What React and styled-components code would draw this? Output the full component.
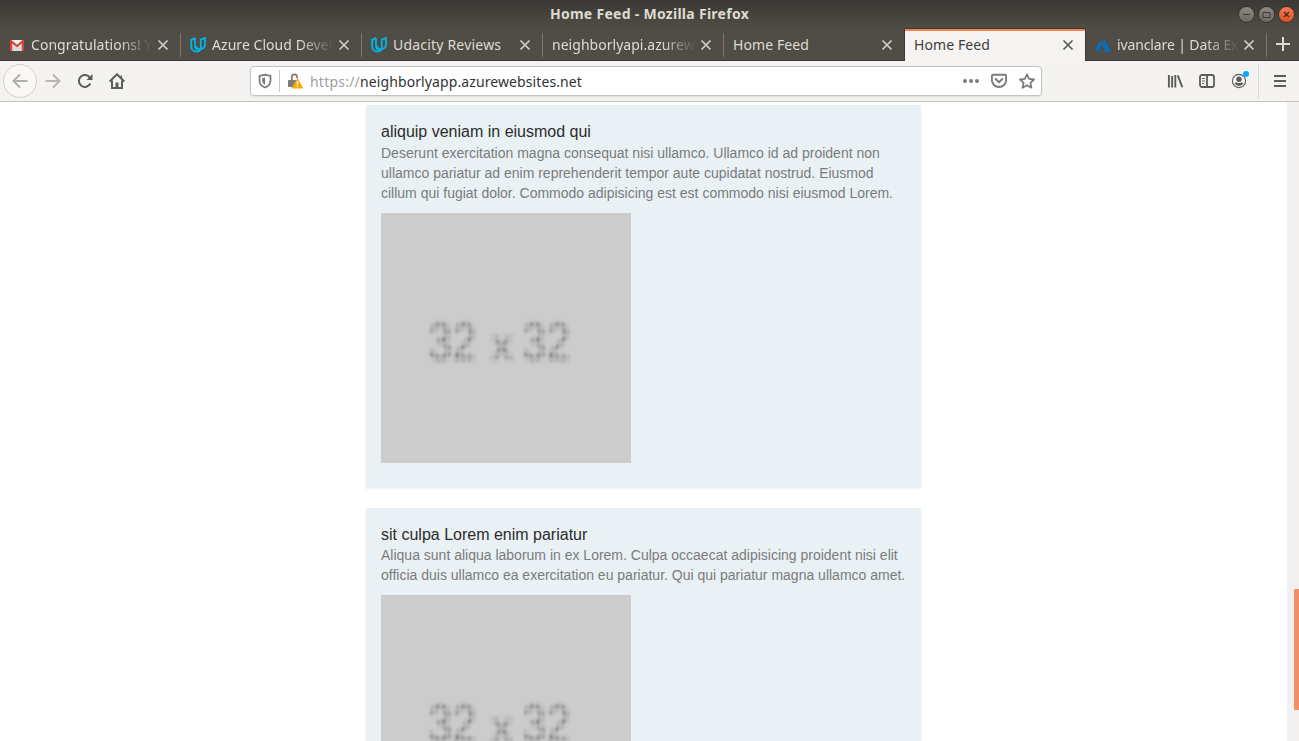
import React from "react";
import styled, { createGlobalStyle, css } from "styled-components";

const GlobalStyle = createGlobalStyle`
  * { box-sizing: border-box; }
  html, body { margin: 0; height: 741px; overflow: hidden; background: #fff; }
`;

const Browser = styled.div`
  width: 1299px;
  height: 741px;
  display: flex;
  flex-direction: column;
  overflow: hidden;
  font-family: "Noto Sans", "Open Sans", sans-serif;
`;

const Frame = styled.header`
  height: 61px;
  flex: none;
  background: linear-gradient(#3b3a36 0, #3d3c37 6px, #504d46 28px, #504d46 100%);
  display: flex;
  flex-direction: column;
`;

const TitleBar = styled.div`
  height: 28px;
  display: grid;
  grid-template-columns: 1fr auto 1fr;
  align-items: center;
`;

const WindowTitle = styled.div`
  grid-column: 2;
  font-size: 14px;
  font-weight: 700;
  line-height: 28px;
  width: 200px;
  text-align: center;
  letter-spacing: 0.28px;
  white-space: nowrap;
  color: #dfdbd2;
`;

const WindowButtons = styled.div`
  display: flex;
  justify-content: flex-end;
  gap: 3px;
  padding-right: 4.5px;
`;

const WindowButton = styled.span`
  width: 17px;
  height: 17px;
  border-radius: 50%;
  border: 1px solid #34332f;
  background: ${(p) => (p.$close ? "linear-gradient(#f37b55, #e0501f)" : "linear-gradient(#8b8981, #6b6962)")};
  display: flex;
  align-items: center;
  justify-content: center;
`;

const TabStrip = styled.nav`
  height: 33px;
  display: flex;
`;

const TabItem = styled.div`
  width: 181px;
  height: 33px;
  flex: none;
  display: flex;
  align-items: center;
  padding: 1px 12px 0 9px;
  color: #dfdbd2;
  border-bottom: 1px solid #3a3935;
  background: linear-gradient(#7b786f, #7b786f) right 5px / 1px 24px no-repeat;
  ${(p) => p.$plain && css`background: none;`}
  ${(p) =>
    p.$active &&
    css`
      background: #f5f4f2;
      color: #3d3d3d;
      border-bottom: 0;
      padding-top: 0;
      padding-bottom: 1px;
      border-top: 1px solid #3a3935;
      box-shadow: inset -1px 0 #3a3935, inset 0 2px #f58152, -1px 0 #3a3935;
      z-index: 1;
    `}
`;

const Favicon = styled.span`
  width: 16px;
  height: 16px;
  margin-right: 6px;
  flex: none;
  display: flex;
`;

const TabLabel = styled.span`
  flex: 1;
  min-width: 0;
  overflow: hidden;
  white-space: nowrap;
  font-size: 14px;
  line-height: 24px;
  padding-top: 1px;
  letter-spacing: ${(p) => p.$spacing || 0}px;
  ${(p) => p.$fade && css`mask-image: linear-gradient(to right, #000 calc(100% - 34px), transparent 100%);`}
`;

const CloseButton = styled.span`
  width: 12px;
  height: 12px;
  margin-left: 4px;
  flex: none;
  display: flex;
`;

const NewTab = styled.div`
  width: 32px;
  display: flex;
  align-items: center;
  justify-content: center;
  border-bottom: 1px solid #3a3935;
`;

const Toolbar = styled.div`
  height: 41px;
  flex: none;
  display: flex;
  align-items: center;
  background: #f4f3f1;
  border-bottom: 1px solid #c6c3bf;
`;

const NavButtons = styled.div`
  width: 250px;
  display: flex;
  align-items: center;
  padding-left: 3px;
`;

const BackButton = styled.span`
  width: 34px;
  height: 34px;
  border-radius: 50%;
  border: 1px solid #d3d1ce;
  background: #f9f8f7;
  display: flex;
  align-items: center;
  justify-content: center;
`;

const ToolButton = styled.span`
  width: 32px;
  height: 32px;
  flex: none;
  display: flex;
  align-items: center;
  justify-content: center;
`;

const UrlBar = styled.div`
  width: 792px;
  height: 30px;
  margin-bottom: 1px;
  border: 1px solid #c5c3c0;
  border-radius: 4px;
  background: #fff;
  box-shadow: 0 1px 2px rgba(0, 0, 0, 0.08);
  display: flex;
  align-items: center;
  padding-left: 6px;
`;

const UrlDivider = styled.span`
  width: 1px;
  height: 22px;
  margin: 0 7px 0 6px;
  background: #c9c9c9;
`;

const UrlText = styled.span`
  flex: 1;
  margin-left: 7px;
  padding-top: 2px;
  font-size: 14px;
  line-height: 26px;
  letter-spacing: 0.1px;
  white-space: nowrap;
  color: #333;
`;

const Scheme = styled.span`
  color: #a0a0a0;
  letter-spacing: 0.22px;
`;

const UrlActions = styled.div`
  display: flex;
  gap: 12px;
  padding-right: 6px;
`;

const RightTools = styled.div`
  flex: 1;
  display: flex;
  align-items: center;
  justify-content: flex-end;
  padding-right: 3px;
`;

const ToolDivider = styled.span`
  width: 1px;
  height: 34px;
  margin: 0 5px 0 3px;
  background: #dbd9d6;
`;

const Viewport = styled.main`
  flex: 1;
  min-height: 0;
  display: flex;
  background: #fff;
`;

const Page = styled.div`
  flex: 1;
  overflow: hidden;
  display: flex;
  flex-direction: column;
  align-items: center;
  gap: 20px;
  padding-top: 2.7px;
  font-family: "Liberation Sans", Arial, sans-serif;
`;

const Card = styled.article`
  width: 555px;
  flex: none;
  padding: 15px 15px 25px;
  background: #e9f1f5;
  box-shadow: 0 1px 2px rgba(0, 0, 0, 0.07);
`;

const CardTitle = styled.h4`
  margin: 0;
  padding-top: 1px;
  font-size: 16px;
  line-height: 21.86px;
  font-weight: 400;
  color: #2c2c2c;
`;

const CardText = styled.p`
  margin: 0 0 10px;
  font-size: 14px;
  line-height: 20px;
  white-space: nowrap;
  color: #7b7b7b;
`;

const Placeholder = styled.div`
  width: 250px;
  height: 250px;
  background: #cccccc;
  overflow: hidden;
  display: flex;
  align-items: baseline;
  padding: 99px 0 0 47px;
  color: #6e6e6e;
  font-size: 53px;
  line-height: 60px;
`;

const grain = css`
  filter: blur(2.8px);
  mask: radial-gradient(circle, #000 10%, rgba(0, 0, 0, 0.4) 75%) 0 0 / 7.8px 7.8px;
`;

const SizeNumber = styled.span`
  width: 60px;
  margin-right: -10px;
  transform: scaleX(0.82);
  transform-origin: left;
  ${grain}
`;

const SizeCross = styled.span`
  width: 44px;
  padding-left: 13px;
  font-size: 44px;
  ${grain}
`;

const ScrollTrack = styled.div`
  width: 12px;
  flex: none;
  padding: 487px 0 0 7px;
  background: #f1f0ef;
`;

const ScrollThumb = styled.div`
  height: 121px;
  border-radius: 1px 0 0 1px;
  background: #f18f69;
`;

const Stroke = ({ size = 16, color = "#5c5c5a", width = 2, children }) => (
  <svg width={size} height={size} viewBox={`0 0 ${size} ${size}`} fill="none" stroke={color} strokeWidth={width}>
    {children}
  </svg>
);

const GmailIcon = () => (
  <svg width="16" height="16" viewBox="0 0 16 16">
    <path d="M1 3h14v11H1z" fill="#f0efed" />
    <path d="M3 14V7l5 4 5-4v7z" fill="#dedcda" />
    <path d="M1 14V3h1.4L8 7.8 13.600 3H15v11h-2.200V6.400L8 10.400 3.200 6.400V14z" fill="#d8433a" />
  </svg>
);

const UdacityIcon = () => (
  <Stroke color="#02b3e4" width={2}>
    <path d="M5 .900 1.200 3v6.200c0 3.300 2.300 5.200 5.300 5.200 2 0 3.500-.800 4.300-2.200" />
    <path d="M5 1v7.800c0 2.200 1.200 3.300 3 3.300M10.800 12.200V2.600L15 .900V7c0 3-1.800 5.200-5.600 5.200C7 12.200 6.200 11 6.200 9" strokeWidth="1.800" />
  </Stroke>
);

const AzureIcon = () => (
  <svg width="16" height="16" viewBox="0 0 16 16" fill="#0072c6">
    <path d="M8.800 1.800 4.200 5.800 0 13.200h3.800z" />
    <path d="M9.500 2.800 7 8.600l4 4.700-7.500 1.100H16z" />
  </svg>
);

const icons = { gmail: GmailIcon, udacity: UdacityIcon, azure: AzureIcon };

const tabs = [
  { label: "Congratulations! Your", icon: "gmail", fade: true, spacing: 0.03 },
  { label: "Azure Cloud Develop", icon: "udacity", fade: true, spacing: 0.05 },
  { label: "Udacity Reviews", icon: "udacity", spacing: 0.2 },
  { label: "neighborlyapi.azurewe", fade: true, spacing: 0.03 },
  { label: "Home Feed", plain: true, spacing: 0.1 },
  { label: "Home Feed", active: true, spacing: 0.1 },
  { label: "ivanclare | Data Exp", icon: "azure", fade: true, spacing: -0.12 },
];

const Tab = ({ tab }) => {
  const Icon = icons[tab.icon];
  return (
    <TabItem $active={tab.active} $plain={tab.plain}>
      {Icon && <Favicon><Icon /></Favicon>}
      <TabLabel $fade={tab.fade} $spacing={tab.spacing}>{tab.label}</TabLabel>
      <CloseButton>
        <Stroke size={12} color={tab.active ? "#5a5a58" : "#d2cec6"} width={1.7}>
          <path d="M1.500 1.500l9 9M10.500 1.500l-9 9" />
        </Stroke>
      </CloseButton>
    </TabItem>
  );
};

const PlaceholderImage = () => (
  <Placeholder>
    <SizeNumber>32</SizeNumber>
    <SizeCross>x</SizeCross>
    <SizeNumber>32</SizeNumber>
  </Placeholder>
);

const posts = [
  {
    title: "aliquip veniam in eiusmod qui",
    lines: [
      "Deserunt exercitation magna consequat nisi ullamco. Ullamco id ad proident non",
      "ullamco pariatur ad enim reprehenderit tempor aute cupidatat nostrud. Eiusmod",
      "cillum qui fugiat dolor. Commodo adipisicing est est commodo nisi eiusmod Lorem.",
    ],
  },
  {
    title: "sit culpa Lorem enim pariatur",
    lines: [
      "Aliqua sunt aliqua laborum in ex Lorem. Culpa occaecat adipisicing proident nisi elit",
      "officia duis ullamco ea exercitation eu pariatur. Qui qui pariatur magna ullamco amet.",
    ],
  },
];

export default function App() {
  return (
    <Browser>
      <GlobalStyle />
      <Frame>
        <TitleBar>
          <span />
          <WindowTitle>Home Feed - Mozilla Firefox</WindowTitle>
          <WindowButtons>
            <WindowButton>
              <Stroke size={9} color="#3c3b37" width={1}><path d="M1 4.500h7" /></Stroke>
            </WindowButton>
            <WindowButton>
              <Stroke size={9} color="#3c3b37" width={1}><path d="M1 2.500h7v5H1z" /></Stroke>
            </WindowButton>
            <WindowButton $close>
              <Stroke size={9} color="#3c2a22" width={1.2}><path d="M2 2l5 5M7 2l-5 5" /></Stroke>
            </WindowButton>
          </WindowButtons>
        </TitleBar>
        <TabStrip>
          {tabs.map((tab, i) => <Tab key={i} tab={tab} />)}
          <NewTab>
            <Stroke color="#dfdbd2" width={2}><path d="M8 1v14M1 8h14" /></Stroke>
          </NewTab>
        </TabStrip>
      </Frame>

      <Toolbar>
        <NavButtons>
          <BackButton>
            <Stroke color="#b1afac"><path d="M15.500 8H1.500M8 1.500 1.500 8 8 14.500" /></Stroke>
          </BackButton>
          <ToolButton>
            <Stroke color="#b8b6b3"><path d="M.500 8h14M8 1.500 14.500 8 8 14.500" /></Stroke>
          </ToolButton>
          <ToolButton>
            <Stroke>
              <path d="M13.300 10.500A6 6 0 1 1 13 4.800" />
              <path d="M15.500 1v6h-6z" fill="#5c5c5a" stroke="none" />
            </Stroke>
          </ToolButton>
          <ToolButton>
            <Stroke>
              <path d="M.700 8.500 8 1.300l7.300 7.200M3 7.500V15h10V7.500" />
              <path d="M6.500 9.500h3V15h-3z" fill="#5c5c5a" stroke="none" />
              <path d="M12.300 2.500V5" strokeWidth="1.500" />
            </Stroke>
          </ToolButton>
        </NavButtons>

        <UrlBar>
          <Stroke color="#77777a" width={1.7}>
            <path d="M8 1.700 13.500 3v4.500c0 3.500-2.200 5.800-5.500 7-3.300-1.200-5.500-3.500-5.500-7V3z" />
            <path d="M8 4.500v7.300C6.200 10.800 5.300 9.500 5.300 7.500V5.100z" fill="#77777a" stroke="none" />
          </Stroke>
          <UrlDivider />
          <svg width="16" height="16" viewBox="0 0 16 16">
            <path d="M4.800 8V4a2.600 2.600 0 0 1 5.200 0v1" fill="none" stroke="#7b7b7b" strokeWidth="1.700" />
            <rect x="1" y="7" width="9" height="7" rx="1" fill="#7b7b7b" />
            <path d="M10.500 5.500 15.500 15H5.300z" fill="#ffa800" stroke="#ffa800" strokeWidth="1" strokeLinejoin="round" />
            <path d="M10.500 8v3.500M10.500 12.700V14" stroke="#fff" strokeWidth="1.400" />
          </svg>
          <UrlText><Scheme>https://</Scheme>neighborlyapp.azurewebsites.net</UrlText>
          <UrlActions>
            <svg width="16" height="16" viewBox="0 0 16 16" fill="#7b7b7b">
              <circle cx="2" cy="8" r="2" /><circle cx="8" cy="8" r="2" /><circle cx="14" cy="8" r="2" />
            </svg>
            <Stroke color="#7b7b7b" width={1.9}>
              <path d="M1.900 1.800h12.200a1 1 0 0 1 1 1v4.400a7.100 6.800 0 0 1-14.200 0V2.800a1 1 0 0 1 1-1z" />
              <path d="M4.600 6 8 9.200 11.400 6" strokeLinecap="round" strokeLinejoin="round" />
            </Stroke>
            <Stroke color="#7b7b7b" width={1.8}>
              <path d="m8 1.400 2.100 4.500 4.900.600-3.600 3.300 1 4.900L8 12.300l-4.400 2.400 1-4.900L1 6.500l4.900-.600z" strokeLinejoin="round" />
            </Stroke>
          </UrlActions>
        </UrlBar>

        <RightTools>
          <ToolButton>
            <Stroke width={1.9}><path d="M1.900 2v12.500M5.100 3v11.500M8.300 2v12.500" /><path d="M10.800 2.300 15.200 14.200" /></Stroke>
          </ToolButton>
          <ToolButton>
            <Stroke width={1.8}>
              <rect x="1" y="2" width="14" height="12" rx="2" />
              <path d="M8 2v12" /><path d="M3 5.500h3M3 8h3M3 10.500h2" strokeWidth="1" />
            </Stroke>
          </ToolButton>
          <ToolButton>
            <svg width="20" height="20" viewBox="-1 0 20 20">
              <circle cx="9" cy="10" r="6.600" fill="none" stroke="#5c5c5a" strokeWidth="1.100" />
              <circle cx="9" cy="8.200" r="2.700" fill="#5c5c5a" />
              <path d="M4.600 12.300q1-1 2-.800 2.400 1.200 4.800 0 1-.200 2 .8-1.400 2.800-4.400 2.800t-4.400-2.800z" fill="#5c5c5a" />
              <circle cx="16" cy="3" r="3" fill="#00adff" />
            </svg>
          </ToolButton>
          <ToolDivider />
          <ToolButton>
            <Stroke><path d="M2 3h12M2 8h12M2 13h12" /></Stroke>
          </ToolButton>
        </RightTools>
      </Toolbar>

      <Viewport>
        <Page>
          {posts.map((post) => (
            <Card key={post.title}>
              <CardTitle>{post.title}</CardTitle>
              <CardText>
                {post.lines.map((line, i) => (
                  <React.Fragment key={line}>{i > 0 && <br />}{line}</React.Fragment>
                ))}
              </CardText>
              <PlaceholderImage />
            </Card>
          ))}
        </Page>
        <ScrollTrack><ScrollThumb /></ScrollTrack>
      </Viewport>
    </Browser>
  );
}
